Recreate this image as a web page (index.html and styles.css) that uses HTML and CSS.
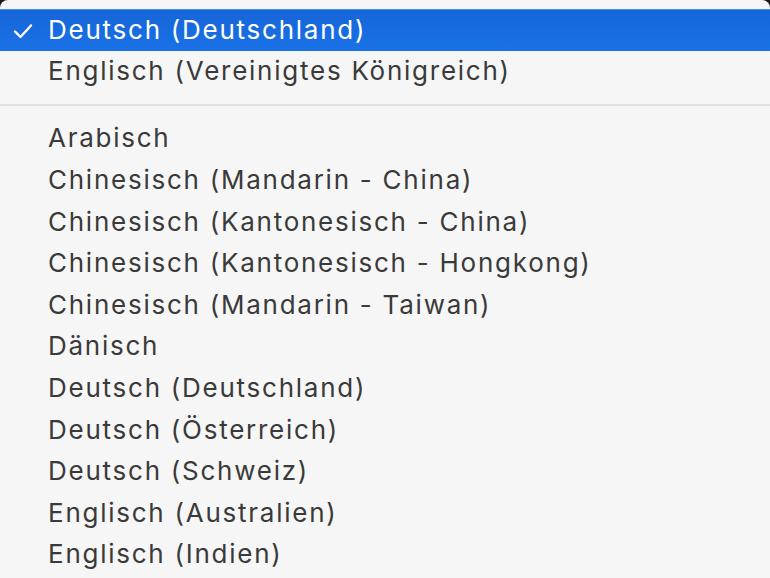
FILE: index.html
```html
<!DOCTYPE html>
<html lang="de">
<head>
<meta charset="utf-8">
<title>Sprache</title>
<link rel="stylesheet" href="styles.css">
</head>
<body>
<div class="menu">
  <div class="item selected">
    <span class="check"><svg width="20" height="16" viewBox="0 0 20 16"><path d="M2 8.5 L7.5 14 L18 2.5" fill="none" stroke="#fff" stroke-width="2.4" stroke-linecap="round" stroke-linejoin="round"/></svg></span>
    <span class="label">Deutsch (Deutschland)</span>
  </div>
  <div class="item"><span class="label">Englisch (Vereinigtes Königreich)</span></div>
  <div class="separator"></div>
  <div class="item"><span class="label">Arabisch</span></div>
  <div class="item"><span class="label">Chinesisch (Mandarin - China)</span></div>
  <div class="item"><span class="label">Chinesisch (Kantonesisch - China)</span></div>
  <div class="item"><span class="label">Chinesisch (Kantonesisch - Hongkong)</span></div>
  <div class="item"><span class="label">Chinesisch (Mandarin - Taiwan)</span></div>
  <div class="item"><span class="label">Dänisch</span></div>
  <div class="item"><span class="label">Deutsch (Deutschland)</span></div>
  <div class="item"><span class="label">Deutsch (Österreich)</span></div>
  <div class="item"><span class="label">Deutsch (Schweiz)</span></div>
  <div class="item"><span class="label">Englisch (Australien)</span></div>
  <div class="item"><span class="label">Englisch (Indien)</span></div>
</div>
</body>
</html>
```
FILE: styles.css
```css
html, body {
  margin: 0;
  padding: 0;
  background: #1a1a1a;
  width: 770px;
  height: 578px;
  overflow: hidden;
}
.menu {
  background: #f6f6f6;
  border-radius: 8px 8px 0 0;
  height: 578px;
  padding-top: 9px;
  box-sizing: border-box;
  font-family: Inter, "Liberation Sans", Arial, sans-serif;
  font-size: 26px;
  letter-spacing: 1.75px;
  color: #3a3a3a;
}
.item {
  height: 41.6px;
  display: flex;
  align-items: center;
  position: relative;
  padding-left: 48px;
  padding-bottom: 2px;
  box-sizing: border-box;
  white-space: nowrap;
}
.item.selected {
  background: linear-gradient(#1565d8, #1a72e6);
  color: #fff;
  border-top: 1px solid #4a8ee8;
}
.check {
  position: absolute;
  left: 13px;
  top: 13px;
  display: flex;
}
.separator {
  height: 26px;
  display: flex;
  align-items: center;
}
.separator::before {
  content: "";
  display: block;
  width: 100%;
  height: 2px;
  background: #e2e2e2;
}
```
